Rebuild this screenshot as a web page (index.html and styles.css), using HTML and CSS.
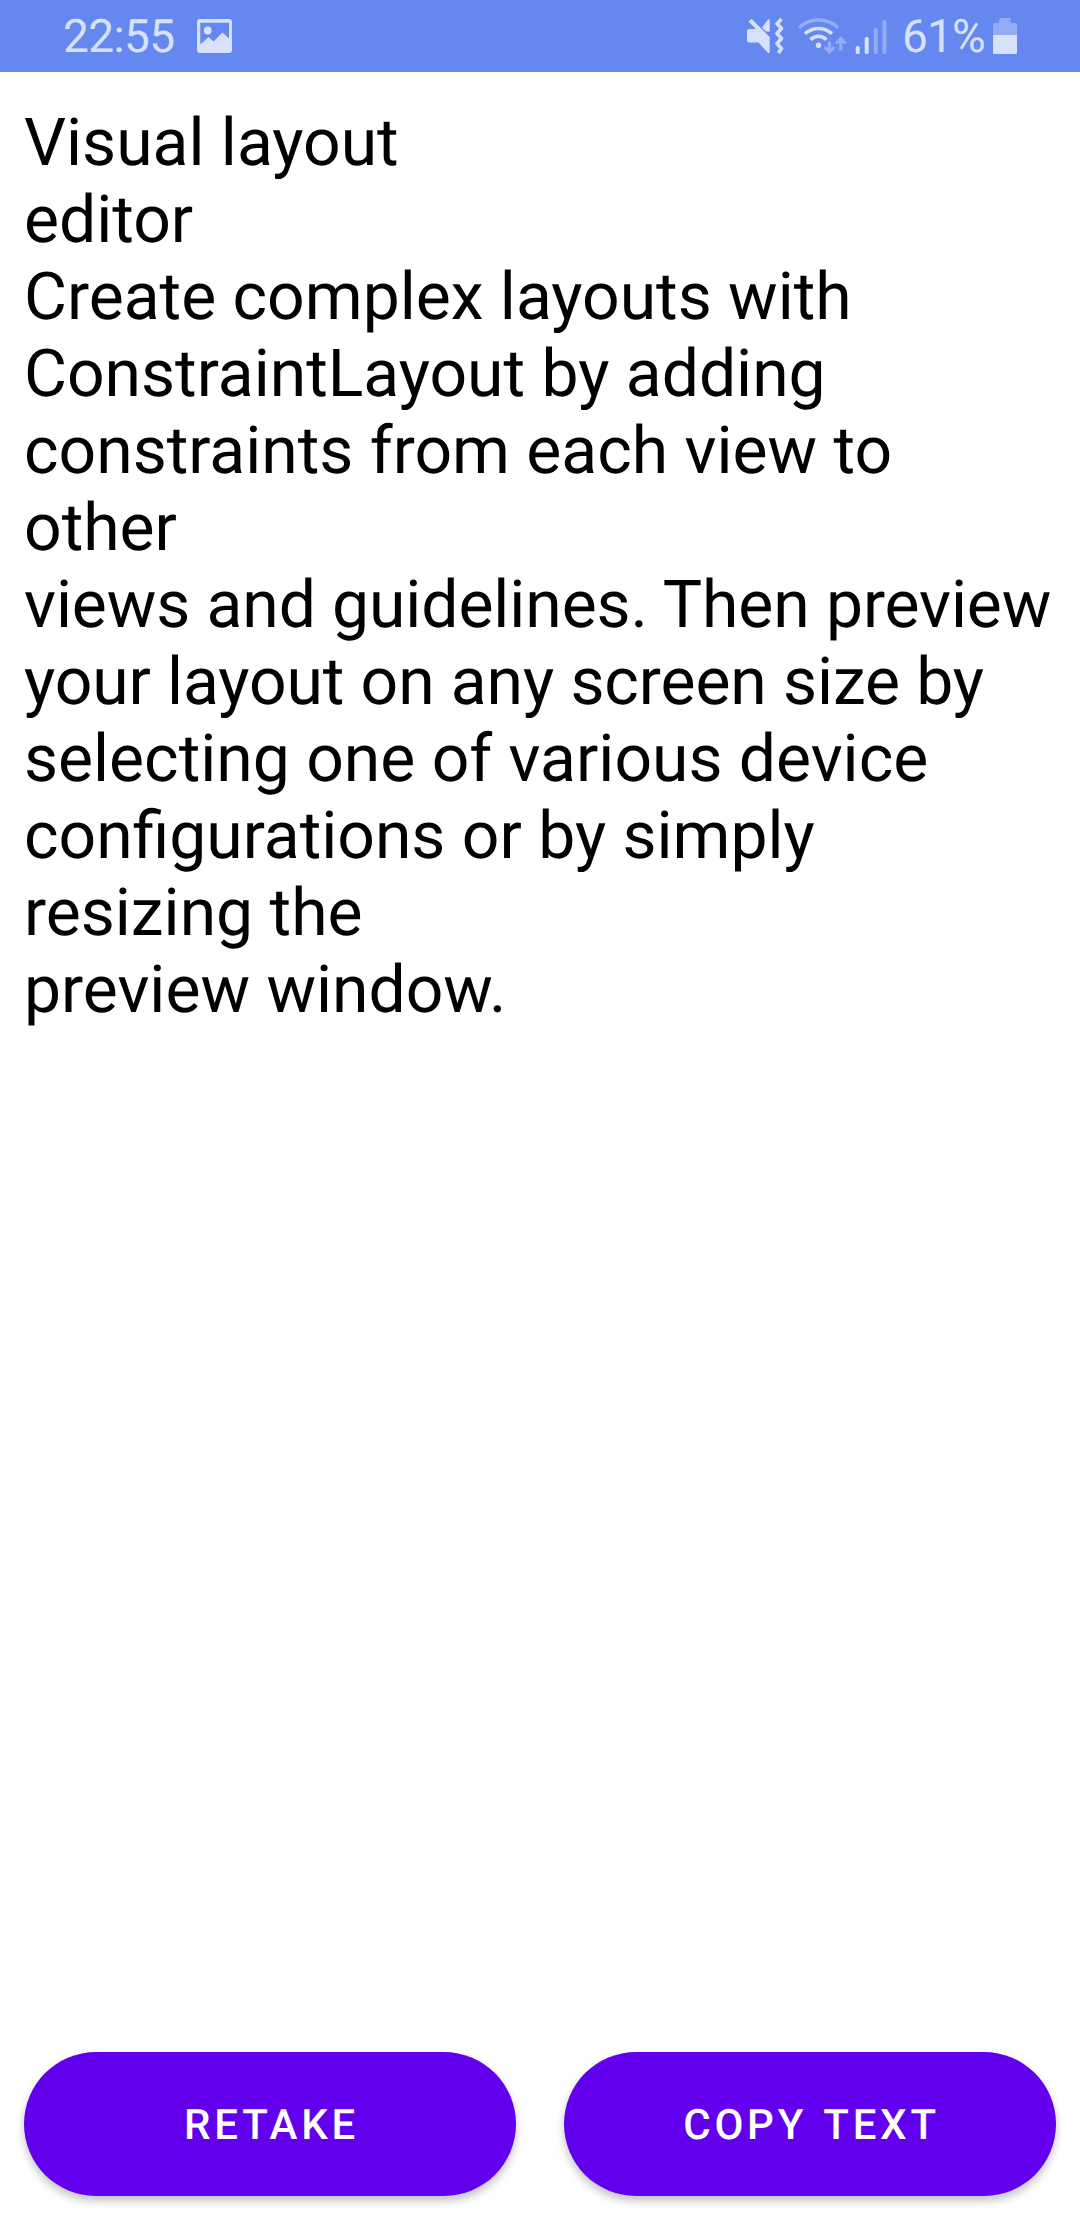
FILE: index.html
```html
<!DOCTYPE html>
<html lang="en">
<head>
<meta charset="utf-8">
<title>Scanned text</title>
<link rel="stylesheet" href="styles.css">
</head>
<body>
<div class="screen">
  <header class="status-bar">
    <span class="clock">22:55</span>
    <svg class="picture-icon" width="35" height="34" viewBox="0 0 35 34">
      <path fill-rule="evenodd" d="M3 0H32Q35 0 35 3V31Q35 34 32 34H3Q0 34 0 31V3Q0 0 3 0ZM3.300 3.700V25.500L11.500 18L16.500 22.500L25.500 13.500L32 19.500V3.700Z"/>
      <circle cx="10.700" cy="11.500" r="3.900"/>
    </svg>
    <div class="indicators">
      <svg width="150" height="36" viewBox="0 0 150 36">
        <path d="M2 11H9L1.500 3.500L4.500.800L22.700 19V35H21L11.500 24.500H2Q0 24.500 0 22.500V13Q0 11 2 11Z"/>
        <path d="M15 9.500L21 1.500H22.700V13.500H19Z"/>
        <path class="line" stroke-width="3.600" stroke-linejoin="round" d="M34.500 1L30 5.700L34.500 10.500L30 15.500L34.500 20.500L30 25.500L34.500 30.500L31.500 35"/>
        <path class="line dim" stroke-width="3.300" d="M52 9.800Q60 2 71.500 2Q83 2 91 9.800"/>
        <path class="line" stroke-width="3.600" d="M58 15.700Q64 10.500 71.500 10.500Q79 10.500 85 15.700"/>
        <path class="line" stroke-width="3.600" d="M63.500 21.800Q67 18.300 71.500 18.300Q76 18.300 79.500 21.800"/>
        <circle cx="71.500" cy="27.300" r="2.700"/>
        <path class="line dim" stroke-width="3.200" d="M82.500 23.500V34M77.800 29L82.500 34L87.200 29M93.800 32.500V21M89 25.500L93.800 20.500L98.500 25.500"/>
        <rect x="108.700" y="28" width="4" height="8" rx="1.500"/>
        <rect x="117.700" y="19" width="4" height="17" rx="1.500"/>
        <rect class="faint" x="126.700" y="10" width="4" height="26" rx="1.500"/>
        <rect class="faint" x="135.500" y="2" width="4" height="34" rx="1.500"/>
      </svg>
      <span class="charge">61%</span>
      <svg class="battery" width="24" height="36" viewBox="0 0 24 36">
        <path class="faint" d="M6.300 1Q6.300 0 7.300 0H16.700Q17.700 0 17.700 1V5H22.500Q24 5 24 6.500V17H0V6.500Q0 5 1.500 5H6.300Z"/>
        <path d="M0 17H24V34.500Q24 36 22.500 36H1.500Q0 36 0 34.500Z"/>
      </svg>
    </div>
  </header>
  <main class="result">Visual layout
editor
Create complex layouts with
ConstraintLayout by adding
constraints from each view to
other
<span class="tight">views and guidelines. Then preview
your layout on any screen size by</span>
selecting one of various device
configurations or by simply
resizing the
preview window.</main>
  <footer class="actions">
    <button class="action" type="button">RETAKE</button>
    <button class="action" type="button">COPY TEXT</button>
  </footer>
</div>
</body>
</html>
```
FILE: styles.css
```css
body {
  margin: 0;
  background: #fff;
  font-family: Roboto, "Liberation Sans", sans-serif;
  text-rendering: geometricPrecision;
}

.screen {
  display: flex;
  flex-direction: column;
  height: 2220px;
}

.status-bar {
  display: flex;
  align-items: center;
  box-sizing: border-box;
  height: 72px;
  padding: 0 63px 0 62px;
  background: #6487f0;
  color: #d8e1fb;
  fill: #d8e1fb;
  font-size: 46px;
  line-height: 72px;
}

.clock,
.charge {
  padding-top: 2px;
}

.clock {
  width: 111px;
  padding-left: 1px;
  letter-spacing: -0.6px;
}

.picture-icon {
  margin-left: 23px;
}

.indicators {
  display: flex;
  align-items: center;
  margin-left: auto;
}

.charge {
  width: 83px;
  margin-left: 5px;
  letter-spacing: -0.9px;
}

.battery {
  margin-left: 8px;
}

.line {
  fill: none;
  stroke: #d8e1fb;
}

.dim {
  stroke: #94acf5;
}

.faint {
  fill: #94acf5;
}

.result {
  flex: 1;
  padding: 33px 24px 0;
  color: #000;
  font-size: 66px;
  line-height: 77px;
  white-space: pre;
}

.tight {
  letter-spacing: -0.09px;
}

.actions {
  display: grid;
  grid-template-columns: 1fr 1fr;
  gap: 48px;
  padding: 24px;
}

.action {
  height: 144px;
  padding: 2px 0 0 3px;
  border: 0;
  border-radius: 72px;
  background: #6200ee;
  box-shadow: 0 5px 8px rgba(0, 0, 0, 0.24);
  color: #fff;
  font-family: inherit;
  font-size: 42px;
  font-weight: 500;
  letter-spacing: 3.75px;
  word-spacing: 3px;
  text-rendering: geometricPrecision;
}
```
